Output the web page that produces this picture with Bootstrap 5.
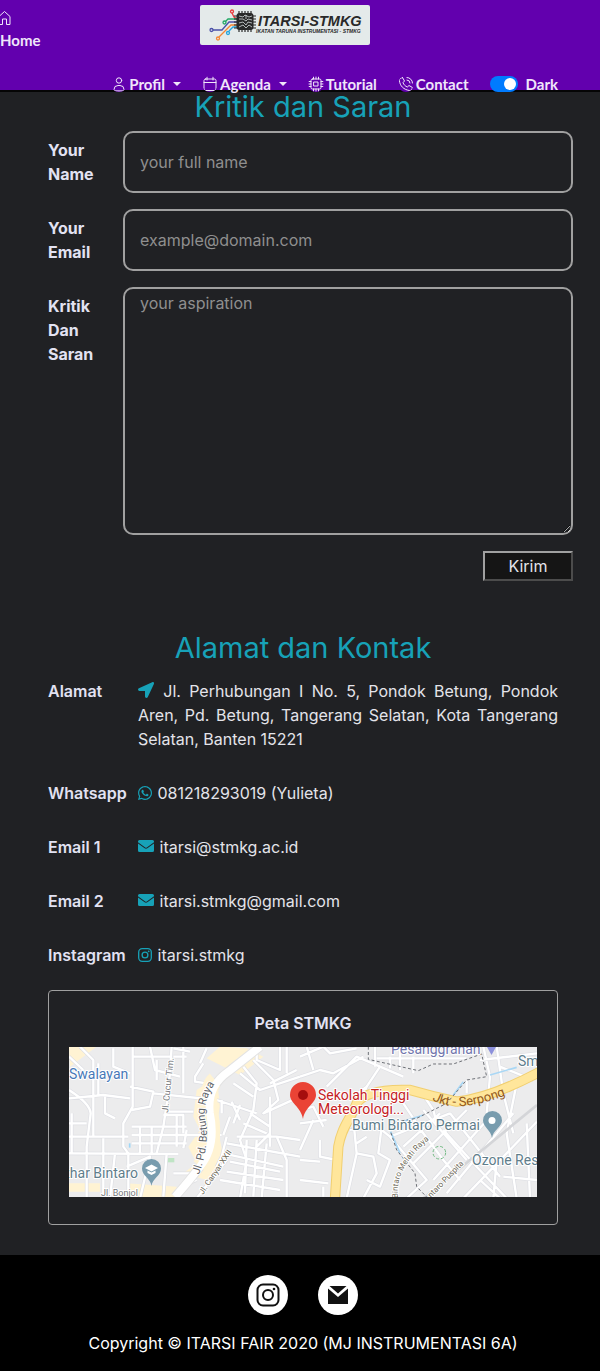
<!DOCTYPE html>
<html lang="id">
<head>
<meta charset="utf-8">
<meta name="viewport" content="width=device-width, initial-scale=1">
<title>ITARSI-STMKG | Kontak</title>
<link href="https://cdn.jsdelivr.net/npm/bootstrap@5.3.0/dist/css/bootstrap.min.css" rel="stylesheet">
<style>
body{background:#202124;color:#e4e4ea;font:400 16px/24px Inter,sans-serif}
.site-header{background:#6200ae;height:90px;box-shadow:0 2px 0 #050505;font-family:Lato,"Open Sans",sans-serif;font-size:15px;font-weight:700}
.site-header a,.site-header button,.site-header label{color:#f0e6fa;text-decoration:none;line-height:24px}
.site-header button{background:none;border:0;padding:0;font-weight:inherit}
.top-bar{display:grid;grid-template-columns:1fr auto 1fr;padding:5px 30px 0 0;height:72px}
.home-link{line-height:22px!important;padding-top:4px}
.home-link svg{display:block;margin:1px 0 3px -3px}
.logo-box{background:#e4eaea;border-radius:2px;width:170px;height:40px}
.menu-bar{gap:21px;padding-right:42px}
.menu-item{display:flex;align-items:center;gap:2px}
.menu-item svg{background:#6200ae;border-radius:8px}
.line-icon{fill:none;stroke:currentColor;stroke-width:1;stroke-linecap:round;stroke-linejoin:round}
.dropdown-toggle::after{margin-left:6px}
.theme-switch{gap:8px;min-height:0;margin:0;padding:0}
.theme-switch .form-check-input{width:28px;height:16px;margin:0;background-color:#007bff;border:0;float:none;
background-image:url("data:image/svg+xml,%3csvg xmlns='http://www.w3.org/2000/svg' viewBox='-4 -4 8 8'%3e%3ccircle r='3' fill='%23fff'/%3e%3c/svg%3e")!important}
.page-body{padding:0 27px 0 33px}
.inset{padding:0 15px}
.section-title{font-size:29px;line-height:33px;margin-bottom:8px;color:#17a2b8;font-weight:400;text-align:center}
.inset .section-title{margin-top:50px}
.field-row{display:grid;grid-template-columns:75px 1fr;margin:0 0 16px 15px}
.info-row{display:grid;grid-template-columns:90px 1fr;margin:0 0 16px;padding:7px 0}
.field-row label,.info-row dt{font-weight:700;color:#e2e2f2}
.info-row dt{font-weight:600}
.field-row label{padding:7px 20px 0 0}
.info-row dd{margin:0}
.info-row dd svg{fill:#17a2b8;vertical-align:-1px;margin-right:1px}
.info-row dd svg.mail-icon{vertical-align:1px}
.field-box,.field-box:focus{background:transparent;border:2px solid #a0a0a0;border-radius:10px;color:#e4e4ea;padding:0 15px;line-height:24px;height:62px}
.field-box::placeholder{color:#8f8f8f}
textarea.field-box{height:248px;padding-top:2px}
.send-btn{width:90px;height:30px;background:#151515;color:#e4e4ea;border:2px solid;border-color:#a0a0a0 #4c4c4c #4c4c4c #a0a0a0;padding:0;line-height:24px}
.map-card{border:1px solid #a0a0a0;border-radius:4px;padding:20px 20px 27px;margin-bottom:30px}
.map-card h3{font-size:16px;line-height:24px;margin-bottom:12px;font-weight:600;text-align:center;color:#e2e2f2}
.map-card svg{display:block;width:100%}
.site-footer{background:#000;color:#fff;padding:20px 27px 16px 33px}
.round-link{width:40px;height:40px;border-radius:50%;background:#fff;display:flex;align-items:center;justify-content:center}
.round-links{gap:30px;margin-bottom:16px}
</style>
</head>
<body>
<header class="site-header">
  <div class="top-bar">
    <a href="#" class="home-link"><svg class="line-icon" width="15" height="16" viewBox="0 0 15 16"><path d="M2 6.500 7.500 1.500 13 6.500V14.500H9.500V9H5.500v5.500H2z"/></svg>Home</a>
    <a href="#" class="logo-box" aria-label="ITARSI-STMKG">
      <svg width="170" height="40" viewBox="0 0 170 40">
        <g fill="none" stroke-width="1.300">
          <path stroke="#e83a3a" d="M32 8l2 4 3 2"/><circle cx="32" cy="6.500" r="1.500" stroke="#e83a3a"/>
          <path stroke="#22a866" d="M25 17l3-3h9"/><circle cx="24.500" cy="17.500" r="1.500" stroke="#22a866"/>
          <path stroke="#4a50a8" d="M13 25h9l7-8h8"/><circle cx="11.500" cy="25" r="1.500" stroke="#4a50a8"/>
          <path stroke="#f58634" d="M19 32l12-12h6"/><circle cx="18" cy="33.500" r="1.500" stroke="#f58634"/>
          <path stroke="#25a5dd" d="M29 26l4-4h4"/><circle cx="28" cy="28" r="1.500" stroke="#25a5dd"/>
        </g>
        <path d="M39 6v21M42 6v21M45 6v21M48 6v21M51 6v21M34 11h22M34 14h22M34 17h22M34 20h22M34 23h22" stroke="#292929" stroke-width="1.200"/>
        <rect x="36.500" y="8" width="17" height="17" rx="3" fill="#292929"/>
        <path d="M39 11l4 1 2-2 4 2 3-1M39 14h4l3 2 2-2 4 1M39 18l4-1 3 3 2-3 4 1M39 22l4-2 3 3 3-3 3 2M46 10v4" fill="none" stroke="#d6dcdc" stroke-width=".800"/>
        <g fill="#292929" font-family="Liberation Sans, sans-serif" font-style="italic" font-weight="700"><text x="58" y="21" font-size="14.500">ITARSI-STMKG</text><text x="56" y="28" font-size="5">IKATAN TARUNA INSTRUMENTASI - STMKG</text></g>
      </svg>
    </a>
  </div>
  <nav class="menu-bar d-flex justify-content-end align-items-center">
    <button class="menu-item dropdown-toggle" type="button"><svg class="line-icon" width="16" height="16" viewBox="0 0 16 16"><circle cx="8" cy="4.500" r="2.700"/><path d="M3 14.500v-1a4 4 0 0 1 4-4h2a4 4 0 0 1 4 4v1z"/></svg>Profil</button>
    <button class="menu-item dropdown-toggle" type="button"><svg class="line-icon" width="16" height="16" viewBox="0 0 16 16"><rect x="2" y="3" width="12" height="11.500" rx="1.500"/><path d="M2 6.500h12M5 1v3M11 1v3"/></svg>Agenda</button>
    <a href="#" class="menu-item"><svg class="line-icon" width="16" height="16" viewBox="0 0 16 16"><rect x="3" y="3" width="10" height="10" rx="1.500"/><rect x="6" y="6" width="4" height="4"/><path d="M5.500 1v2M8 1v2M10.500 1v2M5.500 13v2M8 13v2M10.500 13v2M1 5.500h2M1 8h2M1 10.500h2M13 5.500h2M13 8h2M13 10.500h2"/></svg>Tutorial</a>
    <a href="#" class="menu-item"><svg class="line-icon" width="16" height="16" viewBox="0 0 16 16"><path d="M4.600 1.700 6.500 5 5 6.700c.8 2 2.300 3.500 4.300 4.300L11 9.500l3.300 1.900c0 2-1.300 3.300-3 3.100C5.500 13.500 2 10 1.400 4.600c-.1-1.600 1.200-2.900 3.200-2.900zM9 1.500A5.500 5.500 0 0 1 14.500 7M9 4a3 3 0 0 1 3 3"/></svg>Contact</a>
    <div class="theme-switch form-check form-switch d-flex align-items-center"><input class="form-check-input" type="checkbox" role="switch" id="dark" checked><label for="dark">Dark</label></div>
  </nav>
</header>

<main class="page-body">
  <h2 class="section-title">Kritik dan Saran</h2>
  <form>
    <div class="field-row"><label for="nama">Your Name</label><input id="nama" type="text" class="form-control field-box" placeholder="your full name"></div>
    <div class="field-row"><label for="surel">Your Email</label><input id="surel" type="email" class="form-control field-box" placeholder="example@domain.com"></div>
    <div class="field-row"><label for="saran">Kritik Dan Saran</label><textarea id="saran" class="form-control field-box" placeholder="your aspiration"></textarea></div>
    <div class="d-flex justify-content-end"><button type="submit" class="send-btn">Kirim</button></div>
  </form>

  <section class="inset">
    <h2 class="section-title">Alamat dan Kontak</h2>
    <dl class="m-0">
      <div class="info-row"><dt>Alamat</dt><dd style="text-align:justify"><svg width="16" height="16" viewBox="0 0 16 16"><path d="M14.200.2.900 6.300C-.5 7-.1 9 1.500 9H7v5.500c0 1.600 2.100 2 2.800.600L15.900 1.900C16.400.7 15.300-.4 14.200.2z"/></svg> Jl. Perhubungan I No. 5, Pondok Betung, Pondok Aren, Pd. Betung, Tangerang Selatan, Kota Tangerang Selatan, Banten 15221</dd></div>
      <div class="info-row"><dt>Whatsapp</dt><dd><svg width="14" height="14" viewBox="0 0 448 448"><path d="M381 65C339 23 283 0 224 0 102 0 2 100 2 222c0 39 10 77 30 111L0 448l118-31c32 18 69 27 106 27 122 0 224-100 224-222 0-59-25-115-67-157zM224 407c-33 0-66-9-94-26l-7-4-70 18 19-68-4-7c-19-29-29-63-29-98C39 120 122 38 224 38c49 0 95 19 130 54s57 81 56 130c0 102-85 185-186 185zm101-138c-5-3-33-16-38-18s-9-3-12 3-15 18-18 22-7 4-12 1c-33-16-54-29-76-66-6-10 5-9 16-31 2-4 1-7 0-10l-17-41c-5-11-9-9-13-10h-10c-4 0-10 2-15 7s-20 19-20 46 20 54 23 58 39 60 95 84c36 15 49 17 67 14 11-2 33-14 37-27s5-24 4-26-5-4-11-6z"/></svg> 081218293019 (Yulieta)</dd></div>
      <div class="info-row"><dt>Email 1</dt><dd><svg class="mail-icon" width="16" height="12" viewBox="0 0 16 12"><path d="M1.500 0h13A1.500 1.500 0 0 1 16 1.500v.700L8.800 7.500q-.8.600-1.600 0L0 2.200v-.700A1.500 1.500 0 0 1 1.500 0zM0 3.400l6.700 4.900q1.300.9 2.600 0L16 3.400v7.100a1.500 1.500 0 0 1-1.500 1.500h-13A1.500 1.500 0 0 1 0 10.500z"/></svg> itarsi@stmkg.ac.id</dd></div>
      <div class="info-row"><dt>Email 2</dt><dd><svg class="mail-icon" width="16" height="12" viewBox="0 0 16 12"><path d="M1.500 0h13A1.500 1.500 0 0 1 16 1.500v.700L8.800 7.500q-.8.600-1.600 0L0 2.200v-.700A1.500 1.500 0 0 1 1.500 0zM0 3.400l6.700 4.900q1.300.9 2.600 0L16 3.400v7.100a1.500 1.500 0 0 1-1.500 1.500h-13A1.500 1.500 0 0 1 0 10.500z"/></svg> itarsi.stmkg@gmail.com</dd></div>
      <div class="info-row"><dt>Instagram</dt><dd><svg width="14" height="14" viewBox="0 0 14 14"><g style="fill:none;stroke:#17a2b8;stroke-width:1.300"><rect x=".7" y=".7" width="12.600" height="12.600" rx="3.500"/><circle cx="7" cy="7" r="2.900"/></g><circle cx="10.700" cy="3.300" r=".900"/></svg> itarsi.stmkg</dd></div>
    </dl>

    <div class="map-card">
      <h3>Peta STMKG</h3>
      <svg viewBox="0 0 468 150" font-family="Roboto, sans-serif">
        <defs>
          <path id="west-roads" d="M87 330Q150 370 152 400L140 500V655M87 355L190 345L270 355M195 350V400L225 415M160 470V240L120 200M175 250V350M87 230L130 270M278 200V380L250 430V500L265 520V655M220 205V260L270 280M280 230H390M330 200L345 270L420 290M350 240V300M395 200L385 340L370 440M87 470H265M87 520L415 522M190 475V655M225 520L210 655M87 430H140M95 400V520M270 320L340 335L330 380L275 390M340 340L530 360L650 400M430 200V340M400 230H440M400 205L450 215M275 440H440M370 405H430V460M410 405V500M275 465H490M275 490H440M300 440V520M335 440V520M370 440L350 520M385 395H460M440 450L430 505M490 250L465 290V305L500 310M500 205L480 250M545 360V400M575 365L600 420M600 375L580 430M545 465H500M550 465L570 410M560 470L545 530L530 560M600 280L660 330L780 290M580 310L640 350M610 260L650 310L640 390L600 480L620 540L600 655M640 240L700 300L715 360L670 400L780 350M650 200V240L720 270V200M690 310L770 270M560 490L780 530M590 470L710 470L780 480M550 520L730 560M570 545L720 575M560 575L730 600M540 600L720 630M620 480L615 640M650 480L640 650M680 490L665 655M710 470L740 540V655M630 400L690 440V500M610 430L680 460M690 350V460L650 500M740 200V280M400 580H470M420 620L470 600M470 655L520 590L560 540M260 560L330 530L300 655M380 520L370 650"/>
          <path id="east-roads" d="M0 230L70 200L90 220L170 205M0 290L60 270L100 280L190 230M20 200L40 270M80 320L170 230L240 260L200 320L160 350M240 260L310 290M0 390L40 380L70 440M0 430L80 420M40 420L0 510M60 480V530L110 540M0 540L60 545M0 600L85 610M70 650V620M200 320L160 420L170 520L140 655M150 450L220 430L270 470M170 520L220 530L230 580L190 655M200 470L170 490M245 440L235 520L270 540L240 620L200 600M260 330L310 370L350 430M270 470L380 600L320 655M270 470L450 400M340 420L430 540L480 600M370 390L500 540M310 500L420 400M340 550L500 390M400 600L570 410M440 640L640 400M490 655L711 425M430 450L530 560L620 655M450 400L600 590M550 200L570 290L560 400M590 200L610 340L640 460M540 240L711 220M600 260L700 300M650 310L620 460L650 655M680 430L690 655M590 540L580 655M540 600L600 655M610 590L711 600M500 300V340M360 330L400 390L410 430M225 200V260M270 230V265M300 205V270M340 230V280M230 235H500"/>
          <path id="betung" d="M130 128Q142 92 136 72Q133 52 152 28" fill="none"/>
          <path id="serpong" d="M363 53Q389 68 440 47" fill="none"/>
          <path id="melati" d="M329 151Q325 119 366 88" fill="none"/>
        </defs>
        <rect width="468" height="150" fill="#ececed"/>
        <g transform="translate(-29 -67) scale(.33333)" fill="none" stroke-linejoin="round">
          <path d="M87 200H170L90 260zM500 235L600 285L670 230L620 205L540 200zM530 290L470 330L460 410L480 450L445 500L470 550L430 580L500 600L550 530L530 430L540 380zM87 610H180V635H87zM260 610L410 620V651H270z" fill="#fff3d3"/>
          <path d="M380 534h23v13h-23z" fill="#bfe4c4"/>
          <use href="#west-roads" stroke="#dedfe4" stroke-width="11"/><use href="#west-roads" stroke="#fff" stroke-width="7"/>
          <path d="M405 651Q450 600 480 560Q530 500 510 400Q500 320 565 275L660 200" stroke="#e3e3e3" stroke-width="29"/><path d="M480 560Q530 500 510 400Q500 320 525 300" stroke="#fff3d3" stroke-width="50"/><path d="M405 651Q450 600 480 560Q530 500 510 400Q500 320 565 275L660 200" stroke="#fff" stroke-width="23"/>
          <path d="M269 490v13" stroke="#9dd6f7" stroke-width="5"/>
        </g>
        <g transform="translate(231 -67) scale(.33333)" fill="none" stroke-linejoin="round">
          <use href="#east-roads" stroke="#dedfe4" stroke-width="11"/><use href="#east-roads" stroke="#fff" stroke-width="7"/>
          <path d="M370 655L711 375" stroke="#d4d5d8" stroke-width="8"/>
          <path d="M105 655L115 500C125 440 150 420 170 370Q200 325 330 330Q400 350 470 365Q570 355 720 275" stroke="#f1cf70" stroke-width="31"/><path d="M105 655L115 500C125 440 150 420 170 370Q200 325 330 330Q400 350 470 365Q570 355 720 275" stroke="#ffe69b" stroke-width="25"/>
          <path d="M570 285L650 262M490 305L460 345M370 405L310 425M272 455L300 520" stroke="#a9d7f5" stroke-width="5"/>
          <path d="M205 200V238L355 272L400 252H460L545 222L560 290L500 300L440 370L350 415L290 425L270 450L290 510L345 580L350 620L380 651" stroke="#6d7076" stroke-width="3" stroke-dasharray="9 7"/>
          <circle cx="418" cy="518" r="19" stroke="#70b982" stroke-width="3" stroke-dasharray="9 6"/>
        </g>
        <g stroke="#fff" stroke-width="2" paint-order="stroke" stroke-linejoin="round" font-size="14">
          <text x="0" y="32" fill="#4778b8">Swalayan</text>
          <text x="69" y="131" text-anchor="end" fill="#607d8b">zhar Bintaro</text>
          <text x="32" y="149" font-size="9" fill="#74777b">Jl. Bonjol</text>
          <text transform="translate(99 66) rotate(-84)" font-size="9" fill="#74777b">Jl. Cucur Tim.</text>
          <text font-size="11" fill="#5f6368"><textPath href="#betung">Jl. Pd. Betung Raya</textPath></text>
          <text transform="translate(134 148) rotate(-56)" font-size="8" fill="#6d6856">Jl. Canyar XXII</text>
          <text x="322" y="7" fill="#7176ad">Pesanggrahan</text>
          <text x="449" y="19" fill="#607d8b">Sm</text>
          <text x="249" y="53" fill="#c5221f">Sekolah Tinggi</text>
          <text x="249" y="67" fill="#c5221f">Meteorologi...</text>
          <text font-size="13" fill="#93591b" stroke="none"><textPath href="#serpong">Jkt - Serpong</textPath></text>
          <text x="283" y="83" fill="#607d8b">Bumi Bintaro Permai</text>
          <text x="403" y="118" fill="#607d8b">Ozone Res</text>
          <text font-size="8" fill="#6d6856"><textPath href="#melati">Bintaro Melati Raya</textPath></text>
          <text transform="translate(362 151) rotate(-46)" font-size="8" fill="#6d6856">ntaro Puspita</text>
        </g>
        <path d="M234 72C232 60 221 56 221 48a13 13 0 0 1 26 0C247 56 236 60 234 72z" fill="#ea4335"/><circle cx="234" cy="48" r="5" fill="#a50e0e"/>
        <path d="M423 91C422 83 414 80 414 73.500a9.500 9.500 0 0 1 19 0C433 80 424 83 423 91z" fill="#789cae"/><circle cx="423" cy="73.500" r="3.500" fill="#fff"/>
        <path d="M82.500 139C81.500 131 73 129 73 121.500a9.500 9.500 0 0 1 19 0C92 129 83.500 131 82.500 139z" fill="#789cae"/><path d="M76 121l6.500-3.500L89 121l-6.500 3.500zM78.500 123.500l4 2 4-2v2.500l-4 2-4-2z" fill="#fff"/>
        <path d="M418 0h9l-4.500 8z" fill="#8d91dc"/>
      </svg>
    </div>
  </section>
</main>

<footer class="site-footer">
  <div class="round-links d-flex justify-content-center">
    <a href="#" class="round-link" aria-label="Instagram"><svg width="24" height="24" viewBox="0 0 24 24" fill="none" stroke="#111" stroke-width="2"><rect x="1.500" y="1.500" width="21" height="21" rx="5.500"/><circle cx="12" cy="12" r="5"/><circle cx="18" cy="6" r="1.300" fill="#111" stroke="none"/></svg></a>
    <a href="#" class="round-link" aria-label="Email"><svg width="20" height="18" viewBox="0 0 20 18" fill="#111"><path d="M1.500 0h17L10 7.500zM0 2.500l10 8.500 10-8.500V18H0z"/></svg></a>
  </div>
  <div class="text-center">Copyright © ITARSI FAIR 2020 (MJ INSTRUMENTASI 6A)</div>
</footer>
<script src="https://cdn.jsdelivr.net/npm/bootstrap@5.3.0/dist/js/bootstrap.bundle.min.js"></script>
</body>
</html>
